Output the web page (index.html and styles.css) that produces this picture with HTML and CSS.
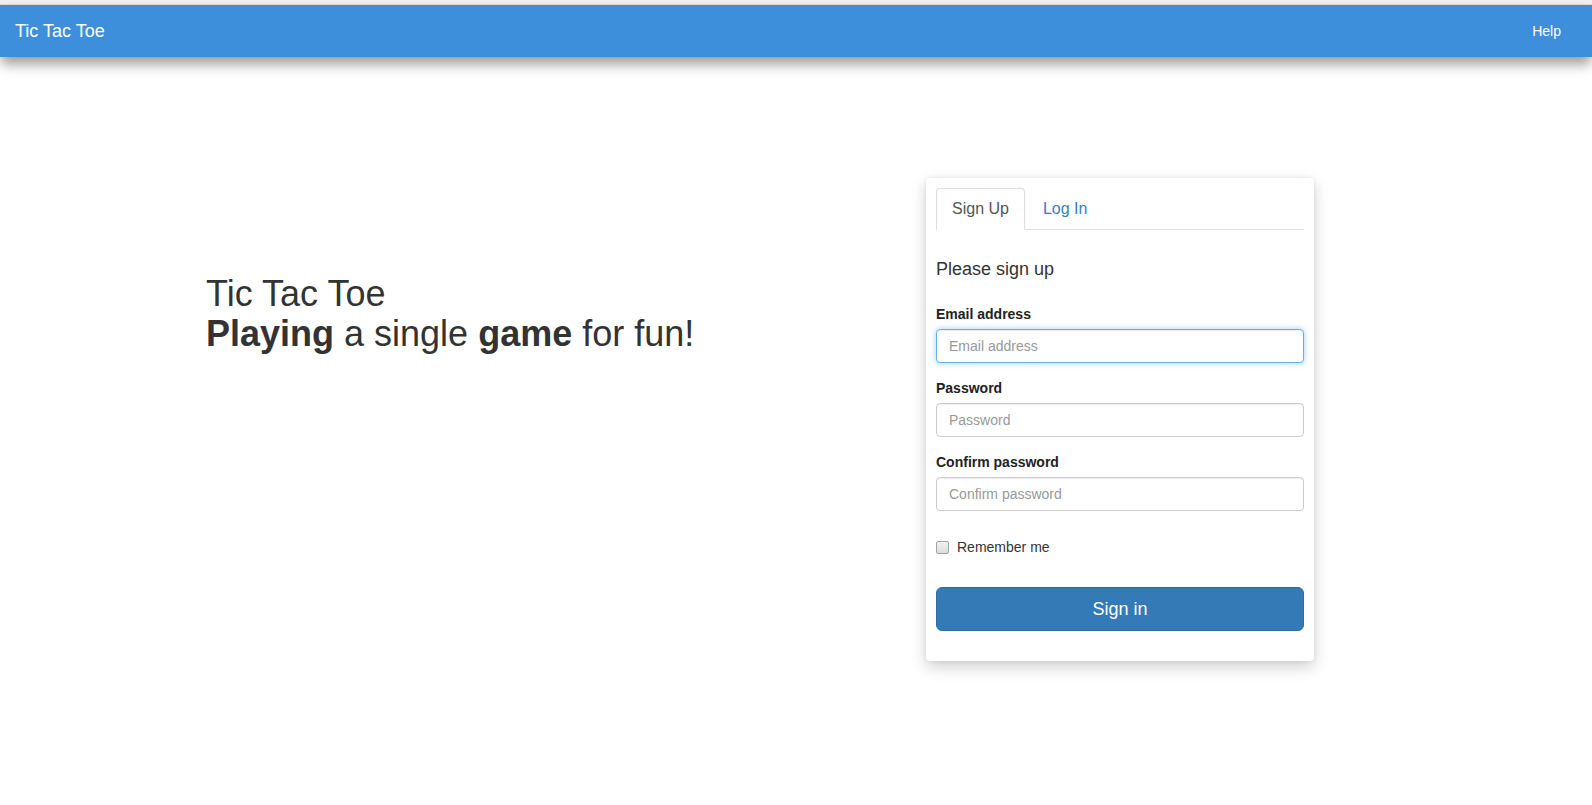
FILE: index.html
```html
<!DOCTYPE html>
<html lang="en">
<head>
<meta charset="utf-8">
<title>Tic Tac Toe</title>
<link rel="stylesheet" href="styles.css">
</head>
<body>
<div class="chrome"></div>
<header class="navbar">
  <a class="brand" href="#">Tic Tac Toe</a>
  <a class="nav-link" href="#">Help</a>
</header>
<main class="page">
  <section class="hero">
    <h1 class="hero-title">Tic Tac Toe<br><strong>Playing</strong> a single <strong>game</strong> for fun!</h1>
  </section>
  <section class="card">
    <ul class="tabs">
      <li class="tab tab-active"><a href="#">Sign Up</a></li>
      <li class="tab"><a href="#">Log In</a></li>
    </ul>
    <form class="form">
      <div class="form-heading">Please sign up</div>
      <div class="form-group">
        <label class="label" for="email">Email address</label>
        <input class="control is-focus" id="email" type="email" placeholder="Email address">
      </div>
      <div class="form-group">
        <label class="label" for="pw">Password</label>
        <input class="control" id="pw" type="password" placeholder="Password">
      </div>
      <div class="form-group">
        <label class="label" for="pw2">Confirm password</label>
        <input class="control" id="pw2" type="password" placeholder="Confirm password">
      </div>
      <label class="remember"><input class="check" type="checkbox"><span>Remember me</span></label>
      <button class="btn" type="button">Sign in</button>
    </form>
  </section>
</main>
</body>
</html>
```
FILE: styles.css
```css
* { box-sizing: border-box; }
html, body { margin: 0; padding: 0; background: #fff; }
body {
  font-family: "Liberation Sans", Arial, Helvetica, sans-serif;
  font-size: 14px;
  color: #333;
  min-height: 805px;
}
a { text-decoration: none; }

.chrome {
  height: 5px;
  background: #f1efed;
  border-bottom: 1px solid #dedcda;
}

.navbar {
  position: relative;
  z-index: 2;
  height: 52px;
  background: #3d8edb;
  display: flex;
  align-items: center;
  justify-content: space-between;
  padding: 0 31px 0 15px;
  box-shadow: 0 8px 12px -1px rgba(0, 0, 0, 0.4);
}
.brand {
  color: #fff;
  font-size: 18px;
}
.nav-link {
  color: #fff;
  font-size: 14px;
}

.page {
  display: flex;
  align-items: flex-start;
  padding: 121px 0 40px 206px;
}

.hero {
  flex: 0 0 720px;
  margin-top: 96px;
}
.hero-title {
  margin: 0;
  font-size: 36px;
  line-height: 1.1;
  font-weight: 400;
  color: #333;
}
.hero-title strong { font-weight: 700; }

.card {
  flex: 0 0 388px;
  background: #fff;
  border-radius: 4px;
  padding: 10px 10px 30px;
  box-shadow: 0 6px 16px rgba(0, 0, 0, 0.19), 0 0 4px rgba(0, 0, 0, 0.07);
}

.tabs {
  list-style: none;
  margin: 0;
  padding: 0;
  display: flex;
  border-bottom: 1px solid #ddd;
  height: 42px;
}
.tab {
  margin: 0 2px -1px 0;
}
.tab a {
  display: block;
  padding: 10px 15px;
  font-size: 16px;
  line-height: 20px;
  color: #3a7cbd;
  border: 1px solid transparent;
  border-radius: 4px 4px 0 0;
}
.tab-active a {
  color: #555;
  background: #fff;
  border-color: #ddd #ddd transparent;
}

.form-heading {
  margin: 29px 0 25px;
  font-size: 18px;
  line-height: 20px;
  color: #333;
}

.form-group { margin-bottom: 15px; }
.label {
  display: inline-block;
  margin-bottom: 5px;
  font-weight: 700;
  line-height: 20px;
  color: #222;
}
.control {
  display: block;
  width: 100%;
  height: 34px;
  padding: 6px 12px;
  font-family: inherit;
  font-size: 14px;
  color: #555;
  background: #fff;
  border: 1px solid #ccc;
  border-radius: 4px;
  box-shadow: inset 0 1px 1px rgba(0, 0, 0, 0.075);
  outline: none;
}
.control::placeholder { color: #999; }
.control.is-focus {
  border-color: #66afe9;
  box-shadow: inset 0 1px 1px rgba(0, 0, 0, 0.075), 0 0 6px rgba(102, 175, 233, 0.6);
}

.remember {
  display: flex;
  align-items: center;
  gap: 8px;
  margin-top: 26px;
  height: 20px;
  line-height: 20px;
  color: #333;
}
.check {
  appearance: none;
  -webkit-appearance: none;
  margin: 1px 0 0;
  width: 13px;
  height: 13px;
  border: 1px solid #a3a3a3;
  border-radius: 2px;
  background: linear-gradient(#f2f2f2, #dcdcdc);
}

.btn {
  display: block;
  width: 100%;
  height: 44px;
  margin-top: 30px;
  padding: 0 16px;
  font-family: inherit;
  font-size: 18px;
  color: #fff;
  background: #337ab7;
  border: 1px solid #2e6da4;
  border-radius: 6px;
  cursor: pointer;
}
```
